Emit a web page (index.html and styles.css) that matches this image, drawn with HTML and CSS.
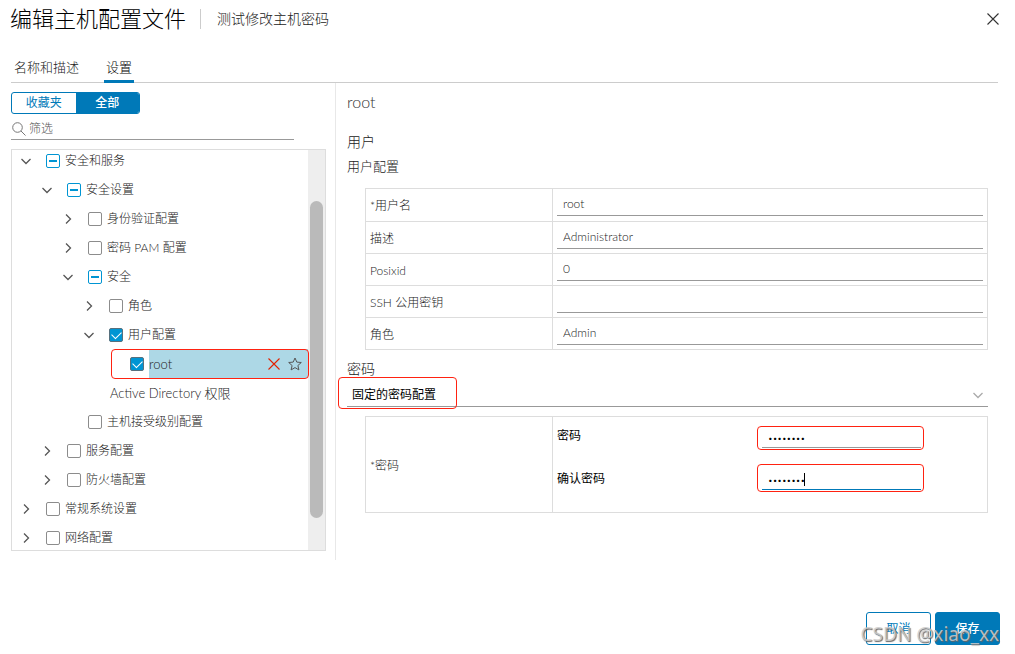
FILE: index.html
```html
<!DOCTYPE html>
<html lang="zh-CN">
<head>
<meta charset="utf-8">
<title>编辑主机配置文件</title>
<link rel="stylesheet" href="styles.css">
</head>
<body>
<svg class="sprite" aria-hidden="true">
  <symbol id="down" viewBox="0 0 12 12"><path d="M1.500 4 6 8.500 10.500 4" fill="none" stroke="currentColor" stroke-width="1.300"/></symbol>
  <symbol id="right" viewBox="0 0 12 12"><path d="M4 1.500 8.500 6 4 10.500" fill="none" stroke="currentColor" stroke-width="1.300"/></symbol>
  <symbol id="cross" viewBox="0 0 12 12"><path d="M.5.5l11 11M11.500.5l-11 11" fill="none" stroke="currentColor" stroke-width="1.100"/></symbol>
</svg>
<div class="dialog">
  <header class="header">
    <h1 class="title">编辑主机配置文件</h1>
    <span class="subtitle">测试修改主机密码</span>
    <button class="icon-btn close" aria-label="关闭"><svg class="i12"><use href="#cross"/></svg></button>
  </header>
  <nav class="tabs">
    <button class="tab">名称和描述</button>
    <button class="tab active">设置</button>
  </nav>
  <main class="body">
    <section class="side">
      <div class="toggle">
        <button class="toggle-btn">收藏夹</button>
        <button class="toggle-btn on">全部</button>
      </div>
      <label class="filter">
        <svg class="i14" viewBox="0 0 14 14"><circle cx="5.500" cy="5.500" r="4.800" fill="none" stroke="#777"/><path d="M9 9l4.500 4.500" stroke="#777"/></svg>
        <input class="filter-input" type="text" placeholder="筛选" aria-label="筛选">
      </label>
      <div class="tree-box">
        <ul class="tree">
          <li class="row l0"><button class="icon-btn arrow" aria-label="折叠"><svg class="i12"><use href="#down"/></svg></button><input class="check partial" type="checkbox" id="c1"><label for="c1">安全和服务</label></li>
          <li class="row l1"><button class="icon-btn arrow" aria-label="折叠"><svg class="i12"><use href="#down"/></svg></button><input class="check partial" type="checkbox" id="c2"><label for="c2">安全设置</label></li>
          <li class="row l2"><button class="icon-btn arrow" aria-label="展开"><svg class="i12"><use href="#right"/></svg></button><input class="check" type="checkbox" id="c3"><label for="c3">身份验证配置</label></li>
          <li class="row l2"><button class="icon-btn arrow" aria-label="展开"><svg class="i12"><use href="#right"/></svg></button><input class="check" type="checkbox" id="c4"><label for="c4">密码 PAM 配置</label></li>
          <li class="row l2"><button class="icon-btn arrow" aria-label="折叠"><svg class="i12"><use href="#down"/></svg></button><input class="check partial" type="checkbox" id="c5"><label for="c5">安全</label></li>
          <li class="row l3"><button class="icon-btn arrow" aria-label="展开"><svg class="i12"><use href="#right"/></svg></button><input class="check" type="checkbox" id="c6"><label for="c6">角色</label></li>
          <li class="row l3"><button class="icon-btn arrow" aria-label="折叠"><svg class="i12"><use href="#down"/></svg></button><input class="check" type="checkbox" id="c7" checked><label for="c7">用户配置</label></li>
          <li class="row l4 selected"><span class="arrow"></span><input class="check" type="checkbox" id="c8" checked>
            <div class="highlight"><label for="c8">root</label>
              <button class="icon-btn remove" aria-label="删除"><svg class="i12"><use href="#cross"/></svg></button>
              <button class="icon-btn" aria-label="收藏"><svg class="i14" viewBox="0 0 14 14"><path d="M7 1l1.800 4.100 4.500.4-3.400 3 1 4.400L7 10.600l-3.900 2.300 1-4.400-3.400-3 4.500-.4z" fill="none" stroke="#565656"/></svg></button>
            </div>
          </li>
          <li class="row l4 leaf">Active Directory 权限</li>
          <li class="row l2"><span class="arrow"></span><input class="check" type="checkbox" id="c9"><label for="c9">主机接受级别配置</label></li>
          <li class="row l1"><button class="icon-btn arrow" aria-label="展开"><svg class="i12"><use href="#right"/></svg></button><input class="check" type="checkbox" id="c10"><label for="c10">服务配置</label></li>
          <li class="row l1"><button class="icon-btn arrow" aria-label="展开"><svg class="i12"><use href="#right"/></svg></button><input class="check" type="checkbox" id="c11"><label for="c11">防火墙配置</label></li>
          <li class="row l0"><button class="icon-btn arrow" aria-label="展开"><svg class="i12"><use href="#right"/></svg></button><input class="check" type="checkbox" id="c12"><label for="c12">常规系统设置</label></li>
          <li class="row l0"><button class="icon-btn arrow" aria-label="展开"><svg class="i12"><use href="#right"/></svg></button><input class="check" type="checkbox" id="c13"><label for="c13">网络配置</label></li>
        </ul>
        <div class="scrollbar"><div class="thumb"></div></div>
      </div>
    </section>
    <section class="detail">
      <h2 class="name">root</h2>
      <h3 class="group">用户</h3>
      <h4 class="subgroup">用户配置</h4>
      <table class="grid">
        <tr><th><label for="f1">*用户名</label></th><td><input class="field" id="f1" type="text" value="root"></td></tr>
        <tr><th><label for="f2">描述</label></th><td><input class="field" id="f2" type="text" value="Administrator"></td></tr>
        <tr><th><label for="f3">Posixid</label></th><td><input class="field" id="f3" type="text" value="0"></td></tr>
        <tr><th><label for="f4">SSH 公用密钥</label></th><td><input class="field" id="f4" type="text" value=""></td></tr>
        <tr><th><label for="f5">角色</label></th><td><input class="field" id="f5" type="text" value="Admin"></td></tr>
      </table>
      <h3 class="group password">密码</h3>
      <div class="select-wrap">
        <select class="select" aria-label="密码"><option>固定的密码配置</option></select>
        <svg class="i12 select-arrow"><use href="#down"/></svg>
        <span class="mark"></span>
      </div>
      <table class="grid">
        <tr><th>*密码</th><td>
          <div class="pair"><label for="p1">密码</label><div class="outline"><input class="secret" id="p1" type="password" value="password"></div></div>
          <div class="pair second"><label for="p2">确认密码</label><div class="outline"><input class="secret focused" id="p2" type="password" value="password"><span class="caret"></span></div></div>
        </td></tr>
      </table>
    </section>
  </main>
  <footer class="footer">
    <button class="btn">取消</button>
    <button class="btn primary">保存</button>
    <span class="watermark">CSDN @xiao_xx</span>
  </footer>
</div>
</body>
</html>
```

FILE: styles.css
```css
* { box-sizing: border-box; }
body {
  margin: 0;
  background: #fff;
  color: #222;
  font: 300 12px/20px Lato, "Noto Sans CJK SC", sans-serif;
}
button, input, select { font: inherit; color: inherit; margin: 0; padding: 0; border: 0; border-radius: 0; background: none; outline: 0; }
h1, h2, h3, h4, ul { margin: 0; padding: 0; font-weight: 300; list-style: none; }
svg { display: block; flex: none; }
.sprite { position: absolute; width: 0; height: 0; }
.i12 { width: 12px; height: 12px; }
.i14 { width: 14px; height: 14px; }
.icon-btn { display: flex; align-items: center; justify-content: center; }

.dialog { display: flex; flex-direction: column; min-height: 100vh; padding: 0 17px 9px 11px; }
.header { display: flex; align-items: center; height: 37px; }
.title { margin-left: -1px; font-size: 22px; line-height: 28px; color: #000; }
.subtitle { margin-left: 14px; padding-left: 16px; border-left: 1px solid #ccc; font-size: 14px; }
.close { width: 12px; height: 12px; margin-left: auto; margin-right: -1px; color: #333; }

.tabs { display: flex; gap: 23px; height: 46px; align-items: flex-end; border-bottom: 1px solid #ccc; }
.tab { height: 32px; padding: 2px 2px 0 3px; font-size: 13px; }
.tab.active { color: #000; border-bottom: 3px solid #0079b8; padding: 3px 2px 0; margin-bottom: -1px; }

.body { display: flex; }
.side { flex: none; width: 325px; min-height: 477px; padding: 9px 9px 9px 0; border-right: 1px solid #e8e8e8; }
.toggle { display: flex; width: 129px; height: 22px; border: 1px solid #0079b8; border-radius: 3px; overflow: hidden; }
.toggle-btn { flex: 1; color: #0079b8; line-height: 18px; font-weight: 400; }
.toggle-btn.on { background: #0079b8; color: #fff; font-weight: 500; }
.filter { display: flex; align-items: center; gap: 3px; width: 283px; height: 26px; padding: 4px 0 0 1px; border-bottom: 1px solid #999; }
.filter-input { flex: 1; min-width: 0; }
.filter-input::placeholder { color: #555; opacity: 1; }

.tree-box { display: flex; margin-top: 9px; border: 1px solid #ddd; }
.tree { flex: 1; margin: -4px 0 -2px; clip-path: inset(4px -2px 2px 0); }
.row { display: flex; align-items: center; height: 29px; position: relative; }
.l0 { padding-left: 8px; }
.l1 { padding-left: 29px; }
.l2 { padding-left: 50px; }
.l3 { padding-left: 71px; }
.l4 { padding-left: 92px; }
.leaf { padding-left: 98px; font-size: 13px; }
.arrow { width: 12px; height: 12px; margin: 1px 14px 0 0; color: #565656; }
.check { appearance: none; flex: none; position: relative; width: 14px; height: 14px; margin-right: 5px; border: 1px solid #8c8c8c; border-radius: 2px; background: #fff; }
.partial { border-color: #0095d3; }
.partial::after { content: ""; position: absolute; left: 2px; top: 5px; width: 8px; height: 2px; background: #0095d3; }
.check:checked { background: #0095d3; border-color: #57707d; }
.check:checked::after { content: ""; position: absolute; left: 2px; top: 2px; width: 8px; height: 5px; border: solid #fff; border-width: 0 0 1px 1px; transform: rotate(-45deg); }
.highlight { flex: 1; display: flex; align-items: center; gap: 8px; align-self: stretch; padding-right: 6px; background: #add8e6; }
.highlight label { flex: 1; font-size: 13px; }
.remove { color: #e12200; }
.selected::after { content: ""; position: absolute; inset: 0 -1px -1px 99px; border: 1px solid #f21; border-radius: 4px; pointer-events: none; }
.scrollbar { width: 17px; padding: 51px 2px 32px; background: #eee; display: flex; }
.thumb { flex: 1; border-radius: 7px; background: #bababa; }

.detail { flex: 1; min-width: 0; padding: 9px 10px 0 11px; }
.name { font-size: 16px; line-height: 20px; color: #333; }
.group { margin-top: 20px; font-size: 14px; line-height: 20px; }
.subgroup { margin: 4px 0 12px; font-size: 13px; line-height: 20px; }
.grid { width: calc(100% - 18px); margin-left: 18px; border-collapse: collapse; table-layout: fixed; }
.grid th, .grid td { border: 1px solid #ddd; padding: 0 4px; text-align: left; font-weight: 300; }
.grid th { width: 187px; padding-top: 2px; }
.field { display: block; width: 100%; height: 24px; margin: 3px 0 4px; padding: 0 6px; border-bottom: 1px solid #999; }
.grid tr:first-child .field { margin-bottom: 5px; }
.password { margin-top: 9px; }
.select-wrap { position: relative; height: 28px; margin-bottom: 9px; border-bottom: 1px solid #999; }
.select { appearance: none; width: 100%; height: 28px; padding: 3px 5px 0; color: #000; font-weight: 400; }
.select-arrow { position: absolute; right: 4px; top: 10px; color: #aaa; pointer-events: none; }
.mark { position: absolute; left: -9px; top: -2px; width: 119px; height: 32px; border: 1px solid #f21; border-radius: 4px; pointer-events: none; }
.pair { display: flex; align-items: flex-start; justify-content: space-between; margin: 9px 59px 0 0; color: #000; }
.pair label { line-height: 20px; font-weight: 400; }
.second { margin: 14px 59px 20px 0; }
.second label { padding-top: 5px; }
.outline { position: relative; width: 167px; padding: 2px 2px 1px 4px; border: 1px solid #f21; border-radius: 4px; }
.secret { display: block; width: 100%; height: 19px; padding: 0 6px; border-bottom: 1px solid #999; color: #000; font-size: 8px; }
.focused { height: 23px; padding-top: 4px; border-bottom-color: #0079b8; }
.caret { position: absolute; left: 46px; top: 8px; width: 1px; height: 13px; background: #000; }

.footer { position: relative; display: flex; justify-content: flex-end; gap: 4px; margin-top: auto; margin-right: -2px; }
.btn { width: 65px; height: 33px; border: 1px solid #0079b8; border-radius: 3px; color: #0079b8; font-weight: 400; }
.primary { background: #0079b8; color: #fff; font-weight: 500; }
.watermark { position: absolute; right: 1px; top: 10px; font: 400 19px/24px "Noto Sans", sans-serif; color: rgba(205, 205, 205, .85); text-shadow: 1px 1px 1px #666; white-space: nowrap; pointer-events: none; }
```
